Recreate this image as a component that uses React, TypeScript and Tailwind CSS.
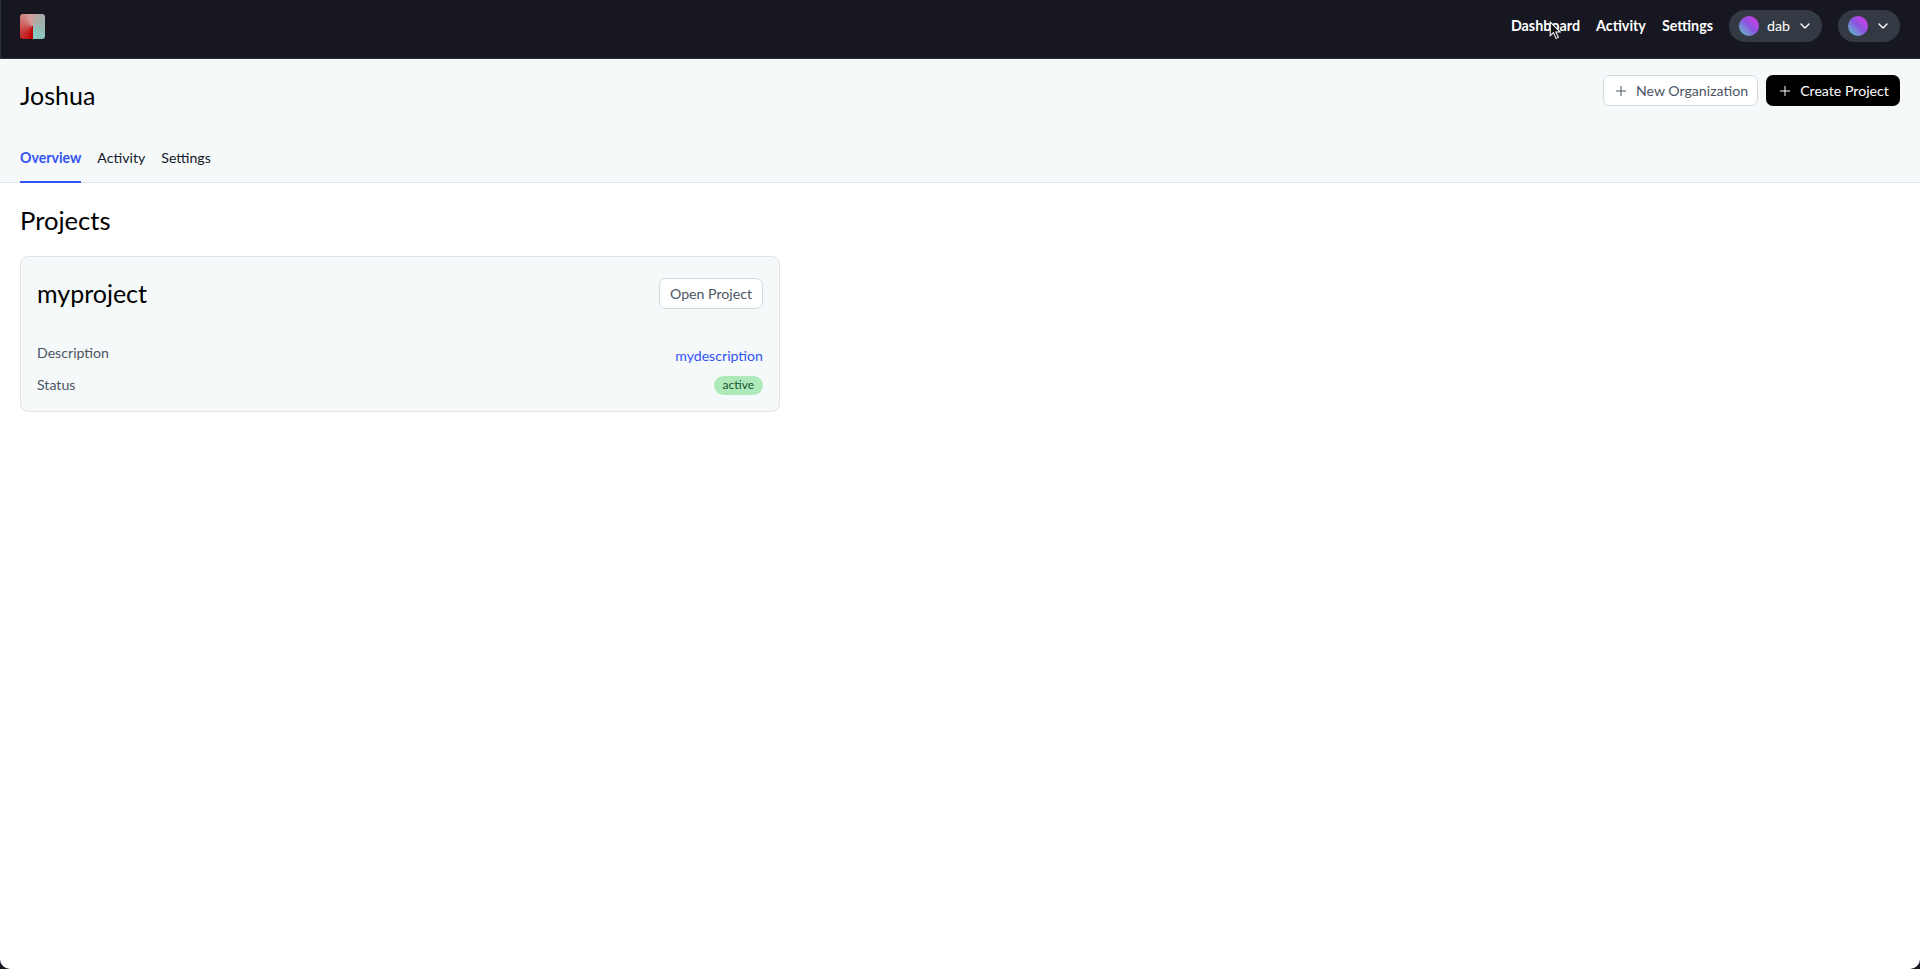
import { ChevronDown, Plus } from 'lucide-react'

function Avatar() {
    return <div className="w-5 h-5 rounded-full bg-gradient-to-bl from-[#e01fe8] via-[#8a55e0] to-[#1fc8c0]" />
}

function App() {
    return (
        <div className="h-[969px] overflow-hidden bg-[#161720] font-['Lato','Noto_Sans',sans-serif]">
            <div className="h-full flex flex-col bg-white rounded-b-[10px] overflow-hidden">
                <header className="relative h-[59px] shrink-0 flex items-center justify-between pl-5 pr-5 pb-[6px] bg-[#161720] border-b border-l border-[#2b2d38]">
                    <div className="w-[25px] h-[25px] -ml-px mt-[1px] rounded-[3px] bg-[conic-gradient(from_180deg_at_50%_50%,#c00000,#d79a9a_45%,#a9aca8_62%,#83cdc3)]" />
                    <nav className="flex items-center text-white text-[14.3px] font-bold">
                        <a className="mr-4">Dashboard</a>
                        <a className="mr-4">Activity</a>
                        <a className="mr-4">Settings</a>
                        <button className="w-[93px] h-8 flex items-center pl-2.5 rounded-full bg-[#343a43] font-normal">
                            <Avatar />
                            <span className="ml-2">dab</span>
                            <ChevronDown className="w-4 h-4 ml-[7px]" />
                        </button>
                        <button className="w-[62px] h-8 ml-4 flex items-center pl-2.5 rounded-full bg-[#343a43]">
                            <Avatar />
                            <ChevronDown className="w-4 h-4 ml-[7px]" />
                        </button>
                    </nav>
                    {/* mouse pointer from the recording */}
                    <svg className="absolute left-[1548px] top-[21px]" width="12" height="19" viewBox="0 0 11 18">
                        <path d="M1 1v13l3-3 2.500 5.500 2.200-1L6.300 10.500H10.500z" fill="#111" stroke="#fff" strokeWidth="1" />
                    </svg>
                </header>

                <section className="h-[124px] shrink-0 flex flex-col justify-between bg-[#f6f9fa] border-b border-[#e1e4e8] px-5">
                    <div className="flex items-start justify-between pt-[16px]">
                        <h1 className="text-[25px] leading-8 text-black mt-1">Joshua</h1>
                        <div className="flex gap-2">
                            <button className="h-[31px] w-[155px] flex items-center justify-center gap-[7px] rounded-[7px] bg-white border border-[#d5dae2] text-[14.15px] text-[#4b5563]">
                                <Plus className="w-4 h-4" strokeWidth={1.5} />
                                New Organization
                            </button>
                            <button className="h-[31px] w-[134px] flex items-center justify-center gap-[7px] rounded-[7px] bg-black text-[14.15px] text-white">
                                <Plus className="w-4 h-4" strokeWidth={1.5} />
                                Create Project
                            </button>
                        </div>
                    </div>
                    <div className="flex gap-4 -mb-px text-[14.15px] text-[#111827]">
                        <a className="h-[42px] pt-[6px] font-bold text-[#3354f4] border-b-2 border-[#3354f4]">Overview</a>
                        <a className="h-[42px] pt-[6px]">Activity</a>
                        <a className="h-[42px] pt-[6px]">Settings</a>
                    </div>
                </section>

                <main className="px-5 pt-[21px]">
                    <h2 className="text-[25.6px] leading-8 text-black">Projects</h2>
                    <div className="w-[760px] h-[156px] mt-[20px] px-4 rounded-lg bg-[#f6f9fa] border border-[#e1e4e8]">
                        <div className="flex items-center justify-between pt-[20px]">
                            <h3 className="text-[25px] leading-8 text-black">myproject</h3>
                            <button className="h-[31px] w-[104px] pt-px rounded-[7px] bg-white border border-[#d5dae2] text-[14.15px] text-[#4b5563]">
                                Open Project
                            </button>
                        </div>
                        <div className="flex justify-between mt-[34px] text-[14.15px] leading-5">
                            <span className="text-[#4b5563]">Description</span>
                            <span className="text-[#3354f4] mt-[3px]">mydescription</span>
                        </div>
                        <div className="flex justify-between items-center mt-[9px] text-[14.15px] leading-5">
                            <span className="text-[#4b5563]">Status</span>
                            <span className="h-[19px] px-[9px] flex items-center rounded-full bg-[#aeeab9] text-[12px] text-[#14532d]">active</span>
                        </div>
                    </div>
                </main>
            </div>
        </div>
    )
}

export default App
